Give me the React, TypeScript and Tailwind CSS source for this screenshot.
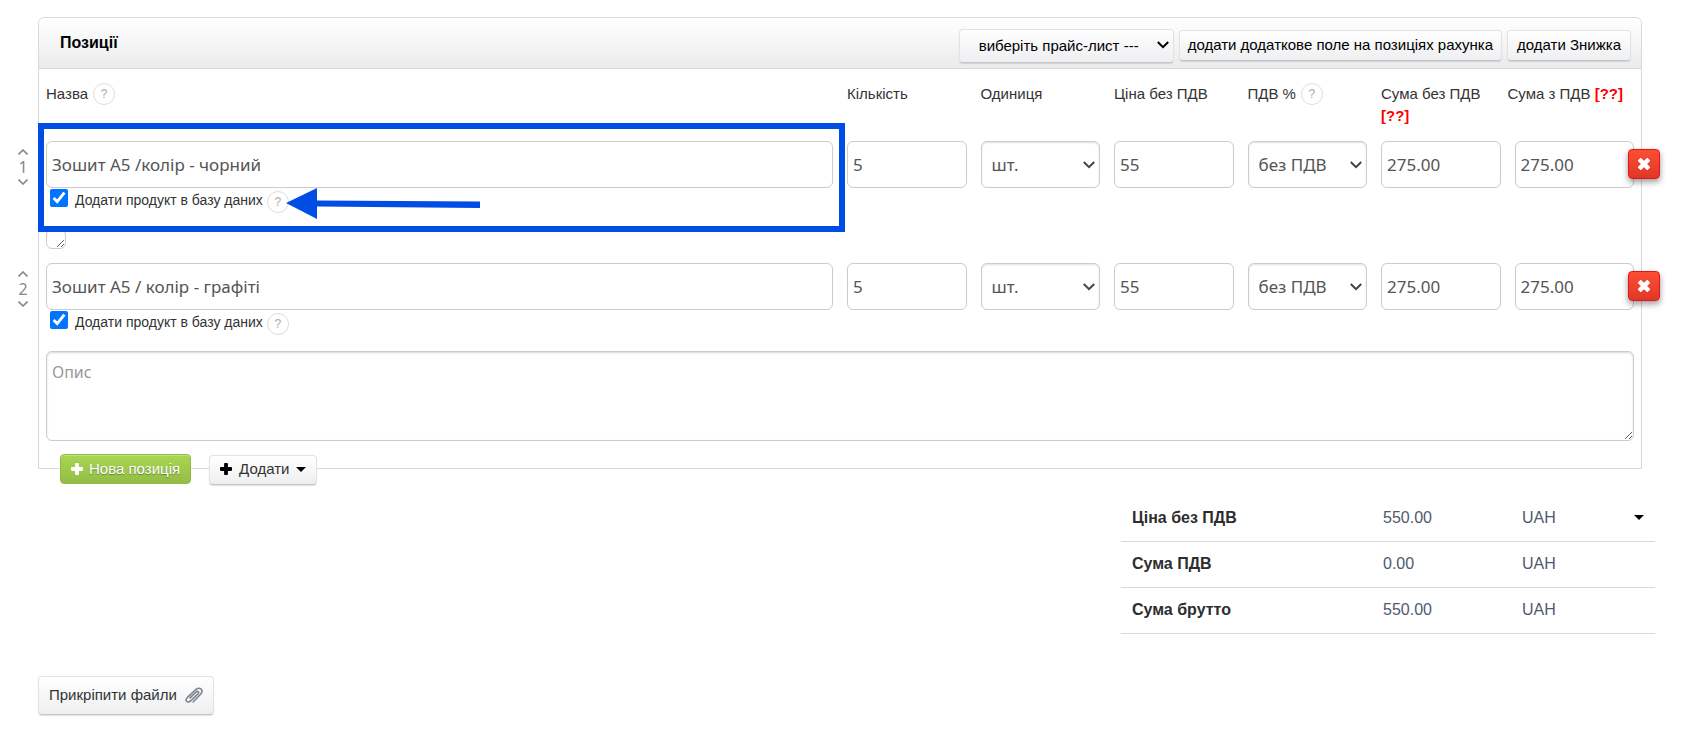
import { useState } from "react";

const inputFont = "font-['Noto_Sans','Open_Sans',sans-serif]";
const field = `${inputFont} h-[47px] w-full min-w-0 rounded-md border border-[#ccc] bg-white text-[17px] text-[#555]`;
const softButton =
  "rounded border border-[#e3e3e5] border-b-[#c5c5c8] bg-linear-to-b from-white to-[#eeeff1] shadow-[0_1px_1px_rgba(0,0,0,0.12)]";

function Help() {
  return (
    <button
      type="button"
      aria-label="Довідка"
      className="inline-flex size-[22px] shrink-0 items-center justify-center rounded-full border border-[#ddd] bg-white text-xs text-[#aaa]"
    >
      ?
    </button>
  );
}

function Plus({ className }: { className?: string }) {
  return (
    <svg viewBox="0 0 12 12" className={className} fill="currentColor" aria-hidden="true">
      <path d="M4.900 0h2.200q.8 0 .8.8v3.300h3.300q.8 0 .8.8v2.200q0 .8-.8.8H7.900v3.300q0 .8-.8.8H4.900q-.8 0-.8-.8V7.900H.8Q0 7.900 0 7.100V4.900q0-.8.8-.8h3.300V.8q0-.8.8-.8z" />
    </svg>
  );
}

function Caret({ className }: { className?: string }) {
  return (
    <svg viewBox="0 0 10 5" className={className} fill="currentColor" aria-hidden="true">
      <path d="M0 0h10L5 5z" />
    </svg>
  );
}

function Arrow({ up }: { up?: boolean }) {
  return (
    <svg viewBox="0 0 10 6" className="h-1.5 w-2.5" fill="none" stroke="currentColor" strokeWidth="1.600" aria-hidden="true">
      <path d={up ? "M.5 5.500 5 1l4.500 4.500" : "M.5.500 5 5 9.500.500"} />
    </svg>
  );
}

function Chevron({ className }: { className?: string }) {
  return (
    <svg viewBox="0 0 12 8" className={`pointer-events-none absolute h-2 w-3 ${className}`} fill="none" stroke="currentColor" strokeWidth="2" aria-hidden="true">
      <path d="M.8 1 6 6.200 11.200 1" />
    </svg>
  );
}

function Paperclip() {
  return (
    <svg viewBox="0 0 18 16" className="h-4 w-[18px]" fill="none" stroke="#7b8390" strokeWidth="1.600" strokeLinecap="round" aria-hidden="true">
      <path d="M8.300 14.800 15.600 7.200Q18 4.400 16.300 2.300 14 .100 10.900 2.500L2.600 10.200Q.200 12.600 1.600 14.200 3.300 16 5.900 13.700L12.900 6.900Q14.100 5.500 13.300 4.700 12.300 3.900 11 5L5.100 10.900" />
    </svg>
  );
}

function FieldSelect({ label, value }: { label: string; value: string }) {
  return (
    <div className="relative min-w-0 text-[#444]">
      <select aria-label={label} className={`${field} appearance-none pl-2.5 shadow-[inset_0_1px_2px_rgba(0,0,0,0.12)]`}>
        <option>{value}</option>
      </select>
      <Chevron className="top-5 right-[5px]" />
    </div>
  );
}

function Row({ n, name, children }: { n: number; name: string; children: React.ReactNode }) {
  const [title, setTitle] = useState(name);
  const [save, setSave] = useState(true);
  return (
    <section className="relative">
      <div className="absolute top-2 -left-7 flex w-2.5 flex-col items-center text-[#888]">
        <button type="button" aria-label="Вгору" className="flex"><Arrow up /></button>
        <span className={`${inputFont} text-base leading-6`}>{n}</span>
        <button type="button" aria-label="Вниз" className="flex"><Arrow /></button>
      </div>
      <div className="grid grid-cols-12 gap-x-3.5">
        <input aria-label="Назва" value={title} onChange={(e) => setTitle(e.target.value)} className={`${field} col-span-6 px-[5px]`} />
        <input aria-label="Кількість" defaultValue="5" className={`${field} px-[5px]`} />
        <FieldSelect label="Одиниця" value="шт." />
        <input aria-label="Ціна без ПДВ" defaultValue="55" className={`${field} px-[5px]`} />
        <FieldSelect label="ПДВ %" value="без ПДВ" />
        <input aria-label="Сума без ПДВ" defaultValue="275.00" className={`${field} px-[5px]`} />
        <input aria-label="Сума з ПДВ" defaultValue="275.00" className={`${field} px-[5px]`} />
      </div>
      <button
        type="button"
        aria-label="Видалити"
        className="absolute top-2 -right-[26px] flex h-[30px] w-8 items-center justify-center rounded border border-[#e3141b] bg-linear-to-b from-[#fb4f33] to-[#e03827] text-white shadow-[0_3px_6px_rgba(0,0,0,0.4)]"
      >
        <Plus className="size-[14px] rotate-45" />
      </button>
      <div className="flex h-7 items-start gap-1 pl-1">
        <input id={`save-${n}`} type="checkbox" checked={save} onChange={(e) => setSave(e.target.checked)} className="mt-px mr-[3px] size-[18px] accent-[#0075ff]" />
        <label htmlFor={`save-${n}`} className="text-sm leading-6">Додати продукт в базу даних</label>
        <span className="mt-[3px] flex"><Help /></span>
      </div>
      {children}
    </section>
  );
}

const totals = [
  ["Ціна без ПДВ", "550.00"],
  ["Сума ПДВ", "0.00"],
  ["Сума брутто", "550.00"],
];

export default function App() {
  return (
    <main className="bg-white pt-[17px] pr-[50px] pb-7 pl-[38px] font-['Liberation_Sans',Arial,sans-serif] text-[15px] text-[#333]">
      <div className="rounded-t-md border border-[#d9d9db]">
        <header className="flex h-[51px] items-start justify-between rounded-t-md border-b border-[#d9d9db] bg-linear-to-b from-white to-[#ebebeb] pr-2.5 pl-[21px]">
          <h1 className="text-base leading-[50px] font-bold text-black">Позиції</h1>
          <div className="flex items-start gap-[5px] pt-3 text-black">
            <div className="relative -mt-px">
              <select aria-label="Прайс-лист" className={`${softButton} h-[34px] w-[215px] appearance-none pr-7 pl-[19px] text-[15px]`}>
                <option>виберіть прайс-лист ---</option>
              </select>
              <Chevron className="top-3 right-[5px]" />
            </div>
            <button type="button" className={`${softButton} h-[31px] px-2 pb-0.5 leading-7`}>додати додаткове поле на позиціях рахунка</button>
            <button type="button" className={`${softButton} h-[31px] px-[9px] pb-0.5 leading-7`}>додати Знижка</button>
          </div>
        </header>

        <div className="px-[7px] pt-3.5 pb-[27px]">
          <div className="mb-3.5 grid h-11 grid-cols-12 gap-x-3.5 leading-[22px]">
            <div className="col-span-6 flex items-start gap-[5px]">Назва <Help /></div>
            <div>Кількість</div>
            <div>Одиниця</div>
            <div>Ціна без ПДВ</div>
            <div className="flex items-start gap-[5px]">ПДВ % <Help /></div>
            <div>Сума без ПДВ <strong className="text-[#f00]">[??]</strong></div>
            <div className="-ml-[7px] whitespace-nowrap">Сума з ПДВ <strong className="text-[#f00]">[??]</strong></div>
          </div>

          <div className="relative">
            <Row n={1} name="Зошит А5 /колір - чорний">
              <textarea aria-label="Опис 1" className="mt-[13px] mb-3.5 block h-5 w-5 rounded-md border border-[#ccc]" />
            </Row>
            <div className="pointer-events-none absolute -top-[18px] -left-2 h-[109px] w-[calc(50%+13px)] border-[6px] border-[#004de6]" />
            <svg viewBox="0 0 194 32" className="pointer-events-none absolute top-[47px] left-60 h-8 w-[194px]" fill="#004de6" aria-hidden="true">
              <path d="M0 15 31 0v12.500l163 1v6.500l-163-1.500V31z" />
            </svg>
          </div>
          <Row n={2} name="Зошит А5 / колір - графіті">
            <textarea
              aria-label="Опис 2"
              placeholder="Опис"
              className={`${inputFont} mt-[13px] block h-[90px] w-full rounded-md border border-[#ccc] px-[5px] py-2 text-base leading-6 text-[#555] shadow-[inset_0_1px_2px_rgba(0,0,0,0.15)] placeholder:text-[#999]`}
            />
          </Row>
        </div>
      </div>

      <div className="relative -mt-[15px] flex gap-[18px] pl-[22px]">
        <button type="button" className="flex h-[30px] items-center gap-1.5 rounded border border-[#93bd42] bg-linear-to-b from-[#a9d651] to-[#93bd46] px-2.5 text-white shadow-[inset_0_1px_0_rgba(255,255,255,0.3)] [text-shadow:0_1px_1px_rgba(0,0,0,0.35)]">
          <Plus className="size-3" />
          Нова позиція
        </button>
        <button type="button" className={`${softButton} mt-px flex h-[30px] items-center gap-[7px] px-2.5 pb-0.5`}>
          <Plus className="size-3 text-black" />
          Додати
          <Caret className="h-[5px] w-2.5 text-black" />
        </button>
      </div>

      <table className="mt-[10px] -mr-[13px] ml-auto w-[534px] table-fixed border-collapse text-base text-[#4e5a70]">
        <tbody>
          {totals.map(([label, value], i) => (
            <tr key={label} className="h-[46px] border-b border-[#d8d9db]">
              <th scope="row" className="w-[251px] pl-[11px] text-left font-bold text-[#2d2d2f]">{label}</th>
              <td className="w-[139px] pl-[11px]">{value}</td>
              <td className="pl-[11px]">UAH</td>
              <td className="w-7 pl-[7px]">
                {i === 0 && (
                  <button type="button" aria-label="Показати більше" className="block text-black">
                    <Caret className="h-[5px] w-2.5" />
                  </button>
                )}
              </td>
            </tr>
          ))}
        </tbody>
      </table>

      <button type="button" className={`${softButton} mt-[42px] flex h-[39px] items-center gap-2 px-2.5`}>
        Прикріпити файли
        <Paperclip />
      </button>
    </main>
  );
}
